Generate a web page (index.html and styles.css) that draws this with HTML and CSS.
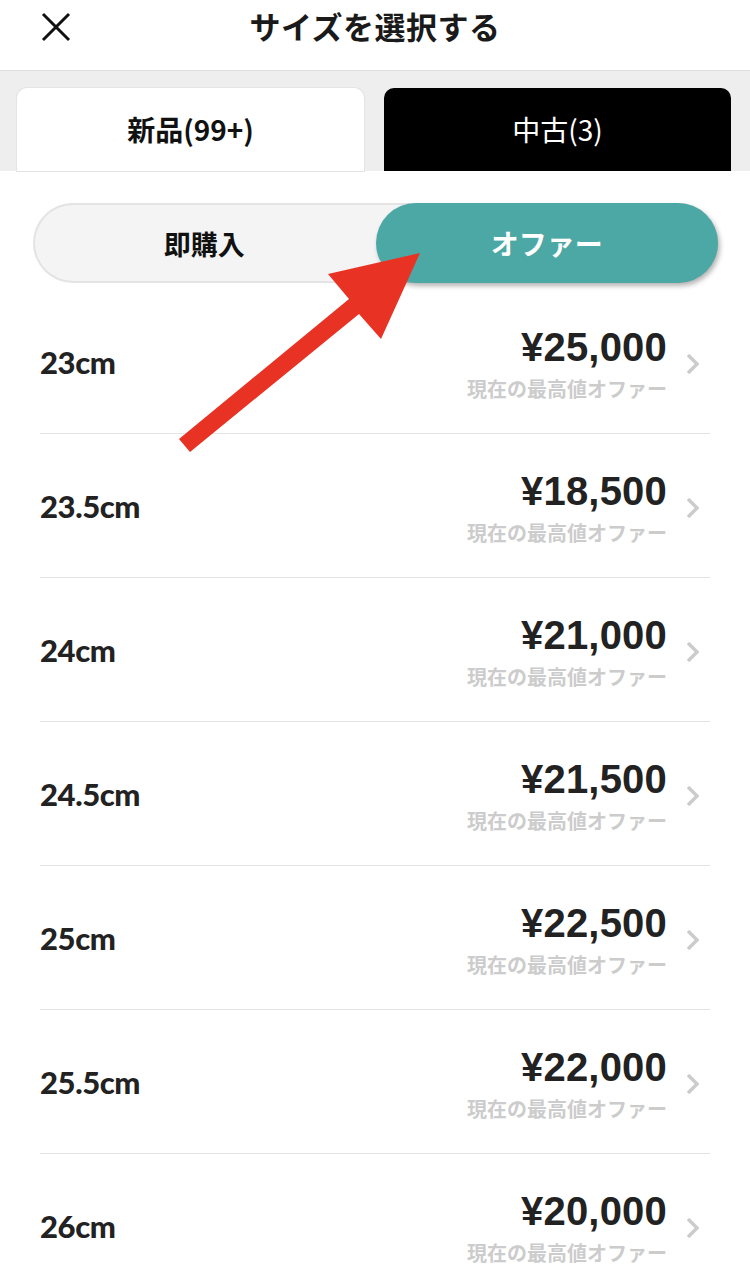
FILE: index.html
```html
<!DOCTYPE html>
<html lang="ja">
<head>
    <meta charset="UTF-8">
    <meta name="viewport" content="width=device-width, initial-scale=1.0">
    <title>サイズを選択する</title>
    <link rel="stylesheet" href="styles.css">
</head>
<body>
    <div class="page-wrapper">
        <header class="top-bar">
            <button class="close-btn" aria-label="閉じる">
                <svg width="30" height="30" viewBox="0 0 30 30">
                    <path d="M2 2 L28 28 M28 2 L2 28" stroke="#111" stroke-width="3" fill="none"/>
                </svg>
            </button>
            <h1 class="title">サイズを選択する</h1>
            <span></span>
        </header>

        <nav class="tabs">
            <div class="tab tab-active">新品(99+)</div>
            <div class="tab tab-dark">中古(3)</div>
        </nav>

        <section class="segment-wrap">
            <div class="segment">
                <div class="segment-item">即購入</div>
                <div class="segment-item segment-on">オファー</div>
            </div>
        </section>

        <ul class="size-list">
            <li class="size-row">
                <span class="size">23cm</span>
                <div class="offer">
                    <span class="price">¥25,000</span>
                    <span class="note">現在の最高値オファー</span>
                </div>
                <svg class="chevron" width="16" height="24" viewBox="0 0 16 24"><path d="M3 3 L12 12 L3 21" stroke="#cccccc" stroke-width="3.5" fill="none"/></svg>
            </li>
            <li class="size-row">
                <span class="size">23.5cm</span>
                <div class="offer">
                    <span class="price">¥18,500</span>
                    <span class="note">現在の最高値オファー</span>
                </div>
                <svg class="chevron" width="16" height="24" viewBox="0 0 16 24"><path d="M3 3 L12 12 L3 21" stroke="#cccccc" stroke-width="3.5" fill="none"/></svg>
            </li>
            <li class="size-row">
                <span class="size">24cm</span>
                <div class="offer">
                    <span class="price">¥21,000</span>
                    <span class="note">現在の最高値オファー</span>
                </div>
                <svg class="chevron" width="16" height="24" viewBox="0 0 16 24"><path d="M3 3 L12 12 L3 21" stroke="#cccccc" stroke-width="3.5" fill="none"/></svg>
            </li>
            <li class="size-row">
                <span class="size">24.5cm</span>
                <div class="offer">
                    <span class="price">¥21,500</span>
                    <span class="note">現在の最高値オファー</span>
                </div>
                <svg class="chevron" width="16" height="24" viewBox="0 0 16 24"><path d="M3 3 L12 12 L3 21" stroke="#cccccc" stroke-width="3.5" fill="none"/></svg>
            </li>
            <li class="size-row">
                <span class="size">25cm</span>
                <div class="offer">
                    <span class="price">¥22,500</span>
                    <span class="note">現在の最高値オファー</span>
                </div>
                <svg class="chevron" width="16" height="24" viewBox="0 0 16 24"><path d="M3 3 L12 12 L3 21" stroke="#cccccc" stroke-width="3.5" fill="none"/></svg>
            </li>
            <li class="size-row">
                <span class="size">25.5cm</span>
                <div class="offer">
                    <span class="price">¥22,000</span>
                    <span class="note">現在の最高値オファー</span>
                </div>
                <svg class="chevron" width="16" height="24" viewBox="0 0 16 24"><path d="M3 3 L12 12 L3 21" stroke="#cccccc" stroke-width="3.5" fill="none"/></svg>
            </li>
            <li class="size-row">
                <span class="size">26cm</span>
                <div class="offer">
                    <span class="price">¥20,000</span>
                    <span class="note">現在の最高値オファー</span>
                </div>
                <svg class="chevron" width="16" height="24" viewBox="0 0 16 24"><path d="M3 3 L12 12 L3 21" stroke="#cccccc" stroke-width="3.5" fill="none"/></svg>
            </li>
        </ul>

        <!-- annotation arrow over the content -->
        <svg class="pointer-arrow" width="750" height="500" viewBox="0 0 750 500">
            <polygon points="420,253 381,339 359,314 190,452 179,439 349,299 328,274" fill="#e83324"/>
        </svg>
    </div>
</body>
</html>
```

FILE: styles.css
```css
/* page */
body {
    margin: 0;
    padding: 0;
    background: #fff;
    color: #222;
    font-family: "Noto Sans CJK JP", "Noto Sans", sans-serif;
}

.page-wrapper {
    position: relative;
    width: 750px;
    height: 1277px;
    overflow: hidden;
}

/* header */
.top-bar {
    height: 70px;
    display: grid;
    grid-template-columns: 1fr auto 1fr;
    align-items: center;
    border-bottom: 1px solid #dcdcdc;
}

.close-btn {
    justify-self: start;
    margin-left: 41px;
    margin-top: -16px;
    padding: 0;
    border: none;
    background: none;
    display: flex;
}

.title {
    margin: -19px 0 0 0;
    font-size: 31px;
    font-weight: 700;
    color: #1a1a1a;
    letter-spacing: 0.5px;
}

/* tabs */
.tabs {
    display: flex;
    gap: 20px;
    padding: 17px 19px 0 17px;
    background: #eeeeee;
}

.tab {
    flex: 1;
    height: 83px;
    border-radius: 10px 10px 0 0;
    display: flex;
    align-items: center;
    justify-content: center;
    font-size: 28px;
    padding-bottom: 2px;
    box-sizing: border-box;
}

.tab-active {
    background: #fff;
    font-weight: 700;
    color: #111;
    box-shadow: 0 0 0 1px #e4e4e4;
}

.tab-dark {
    background: #000;
    color: #fff;
}

/* segmented control */
.segment-wrap {
    padding: 32px 32px 7px 33px;
}

.segment {
    display: flex;
    height: 80px;
    border-radius: 40px;
    background: #f4f4f4;
    box-shadow: inset 0 0 0 2px #e4e4e4;
}

.segment-item {
    flex: 1;
    display: flex;
    align-items: center;
    justify-content: center;
    font-size: 27px;
    font-weight: 700;
    color: #111;
    border-radius: 40px;
}

.segment-on {
    background: #4ca8a5;
    color: #fff;
    font-size: 28px;
    box-shadow: 2px 3px 5px rgba(0, 0, 0, 0.3);
}

/* list */
.size-list {
    list-style: none;
    margin: 0 40px;
    padding: 0;
}

.size-row {
    height: 143px;
    display: flex;
    align-items: center;
    border-bottom: 1px solid #e4e4e4;
}

.size {
    flex: 1;
    font-family: "Lato", sans-serif;
    font-weight: 900;
    font-size: 31px;
    letter-spacing: -0.4px;
    color: #222;
}

.offer {
    display: flex;
    flex-direction: column;
    align-items: flex-end;
    gap: 8px;
    margin-top: 3px;
}

.price {
    font-family: "Liberation Sans", Arial, sans-serif;
    font-weight: 700;
    font-size: 40px;
    line-height: 44px;
    letter-spacing: 0.2px;
    color: #222;
}

.note {
    font-size: 20px;
    line-height: 24px;
    font-weight: 700;
    color: #cccccc;
}

.chevron {
    margin-left: 18px;
    margin-right: 9px;
    margin-top: 4px;
}

.pointer-arrow {
    position: absolute;
    top: 0;
    left: 0;
    pointer-events: none;
}
```
